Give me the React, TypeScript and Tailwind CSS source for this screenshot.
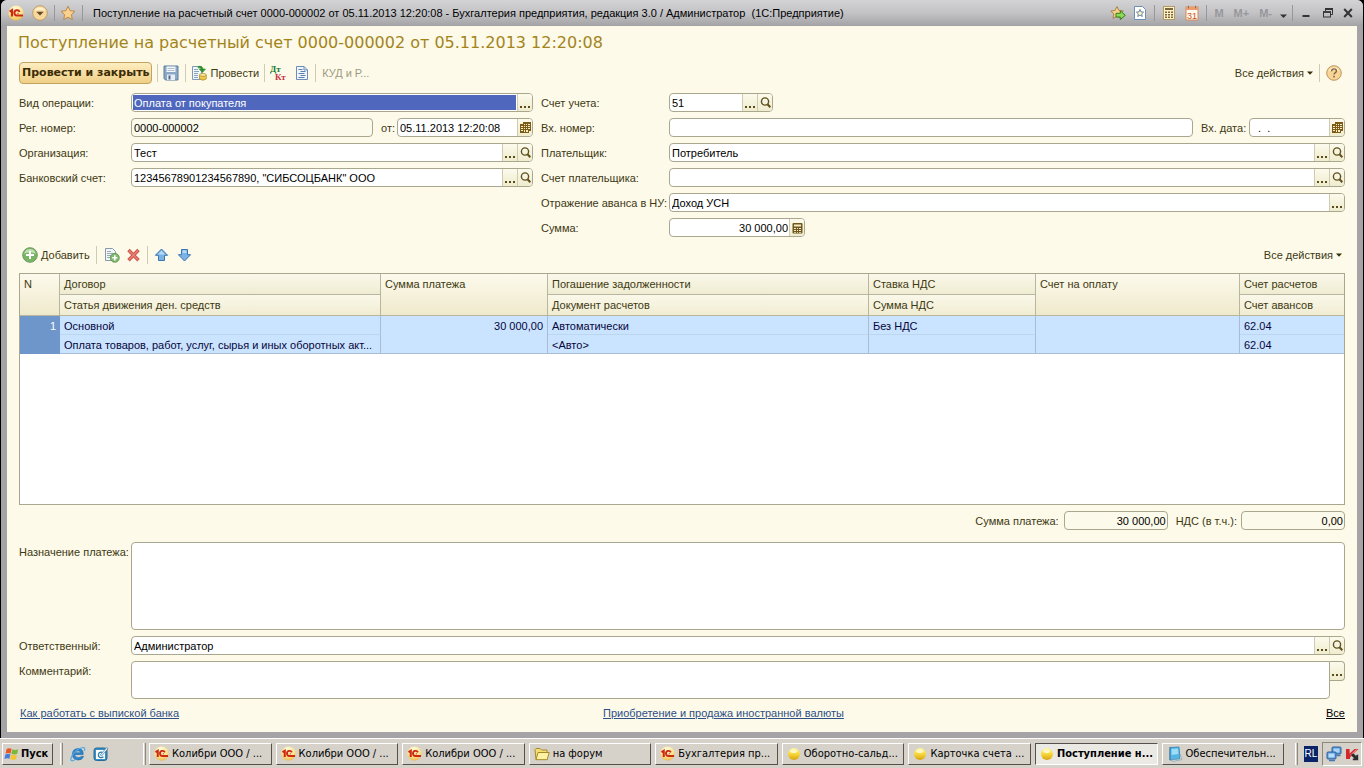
import React from 'react';

type Tool = 'dots' | 'lens' | 'calendar' | 'calc';

const toolLabels: Record<Tool, string> = {
  dots: 'Выбрать',
  lens: 'Открыть',
  calendar: 'Календарь',
  calc: 'Калькулятор',
};

function Dots() {
  return (
    <svg width="12" height="14" viewBox="0 0 12 14" fill="#5a4d1c" shapeRendering="crispEdges">
      <rect x="1" y="10" width="2" height="2" />
      <rect x="5" y="10" width="2" height="2" />
      <rect x="9" y="10" width="2" height="2" />
    </svg>
  );
}

function Lens() {
  return (
    <svg width="13" height="14" viewBox="0 0 13 14" fill="none" stroke="#5f511e">
      <circle cx="6" cy="5.5" r="3.6" strokeWidth="1.4" />
      <path d="M8.5 8.2 L11.3 11.2" strokeWidth="2" />
    </svg>
  );
}

function CalendarGlyph() {
  return (
    <svg width="13" height="14" viewBox="0 0 13 14" shapeRendering="crispEdges">
      <path d="M4 1h8v9h-2v2H1V3h3z" fill="#7a5c16" />
      <path
        d="M5 3h1v1H5zM7 3h1v1H7zM9 3h2v1H9zM5 5h1v1H5zM7 5h1v1H7zM9 5h2v1H9zM5 7h1v1H5zM7 7h1v1H7zM9 7h2v1H9zM2 5h2v1H2zM2 7h2v1H2zM2 9h2v1H2zM5 9h1v2H5zM7 9h2v2H7z"
        fill="#f7edc4"
      />
    </svg>
  );
}

function CalcGlyph() {
  return (
    <svg width="13" height="14" viewBox="0 0 13 14">
      <rect x="1.5" y="2" width="10" height="10.5" rx="1" fill="#6d571c" />
      <path
        d="M3 3.5h7v2H3zM3 7h2v1H3zM6 7h1v1H6zM8 7h2v1H8zM3 9h2v1H3zM6 9h1v1H6zM8 9h2v1H8zM3 11h2v.8H3zM6 11h1v.8H6zM8 11h2v.8H8z"
        fill="#f7edc4"
      />
    </svg>
  );
}

function ToolGlyph({ tool }: { tool: Tool }) {
  if (tool === 'dots') return <Dots />;
  if (tool === 'lens') return <Lens />;
  if (tool === 'calendar') return <CalendarGlyph />;
  return <CalcGlyph />;
}

interface FieldProps {
  id: string;
  value?: string;
  tools?: Tool[];
  className?: string;
  right?: boolean;
  selected?: boolean;
  readOnly?: boolean;
}

function Field({ id, value = '', tools = [], className = 'flex-1', right, selected, readOnly }: FieldProps) {
  return (
    <div
      className={`flex h-[19px] min-w-0 overflow-hidden rounded-[4px] border border-[#aaa78f] ${
        readOnly ? 'bg-[#fcfaea]' : 'bg-white'
      } ${className}`}
    >
      <input
        id={id}
        type="text"
        defaultValue={value}
        readOnly={readOnly}
        className={`min-w-0 flex-1 text-[11px] outline-none ${
          selected
            ? 'm-px bg-[#4f68bd] px-px pt-px leading-[14px] text-white'
            : 'bg-transparent px-[2px] pt-[2px] leading-[15px] text-black'
        } ${right ? 'pr-px text-right' : ''}`}
      />
      {tools.map((tool) => (
        <button
          key={tool}
          type="button"
          aria-label={toolLabels[tool]}
          className="flex w-[15px] shrink-0 items-center justify-center border-l border-[#cfcbb0] bg-linear-to-b from-[#fcfaec] to-[#efecce]"
        >
          <ToolGlyph tool={tool} />
        </button>
      ))}
    </div>
  );
}

function Row({ id, label, wide, children }: { id: string; label: string; wide?: boolean; children: React.ReactNode }) {
  return (
    <div className="flex items-center">
      <label htmlFor={id} className={`shrink-0 whitespace-nowrap ${wide ? 'w-[128px]' : 'w-[112px]'}`}>
        {label}
      </label>
      {children}
    </div>
  );
}

function Sep() {
  return <span className="h-[18px] w-px shrink-0 bg-[#cfccb4]" />;
}

function TitleSep() {
  return <span className="h-[16px] w-px shrink-0 bg-[#98989c]" />;
}

function OneC({ size = 16 }: { size?: number }) {
  return (
    <svg width={size} height={size} viewBox="0 0 16 16" className="shrink-0">
      <defs>
        <radialGradient id="onec" cx="45%" cy="25%" r="80%">
          <stop offset="0" stopColor="#fffde0" />
          <stop offset="0.6" stopColor="#fce48c" />
          <stop offset="1" stopColor="#eeb044" />
        </radialGradient>
      </defs>
      <circle cx="8" cy="8" r="7.6" fill="url(#onec)" />
      <g fill="none" stroke="#cc2a12">
        <path d="M1.6 6.6 L4 5.2 V11.6" strokeWidth="2.2" />
        <path d="M11.6 6.9 A2.7 2.7 0 1 0 9.2 10.6 H15" strokeWidth="2" />
        <path d="M9.3 8.3 H10.6" strokeWidth="1" />
      </g>
    </svg>
  );
}

function Star({ size = 16 }: { size?: number }) {
  return (
    <svg width={size} height={size} viewBox="0 0 16 16" className="shrink-0">
      <path
        d="M8 1.2 L10.1 5.7 L15 6.3 L11.4 9.7 L12.3 14.6 L8 12.2 L3.7 14.6 L4.6 9.7 L1 6.3 L5.9 5.7 Z"
        fill="#f9d08c"
        stroke="#b98a4c"
        strokeWidth="1"
        strokeLinejoin="round"
      />
    </svg>
  );
}

function Ball() {
  return (
    <svg width="14" height="14" viewBox="0 0 14 14" className="shrink-0">
      <defs>
        <linearGradient id="ball" x1="0" y1="0" x2="0" y2="1">
          <stop offset="0" stopColor="#fff7a8" />
          <stop offset="0.5" stopColor="#f7d83a" />
          <stop offset="1" stopColor="#d9a312" />
        </linearGradient>
      </defs>
      <circle cx="7" cy="7" r="6" fill="url(#ball)" />
      <ellipse cx="6.6" cy="4.3" rx="3.4" ry="1.8" fill="#fffde0" opacity="0.8" />
    </svg>
  );
}

function Folder() {
  return (
    <svg width="16" height="16" viewBox="0 0 16 16" className="shrink-0">
      <path d="M1 3.5 L2 2.5 H6 L7.5 4 H13 V13.5 H2 Z" fill="#f5dd72" stroke="#a58a2c" />
      <path d="M4 6.5 H15.2 L13.2 13.7 H2 Z" fill="#fdf2a4" stroke="#a58a2c" />
    </svg>
  );
}

function Notebook() {
  return (
    <svg width="16" height="16" viewBox="0 0 16 16" className="shrink-0">
      <path d="M3 1.5 L12 1 L13 13 L3 14 Z" fill="#55b4e4" stroke="#2d7fb0" strokeWidth="0.8" />
      <path d="M4.5 3 L11 2.5 L11.5 8 L4.5 9 Z" fill="#9bdcf6" />
      <path d="M12.8 8 L15 13.6 L6 15.4 L3.6 14 L13 13 Z" fill="#d8e4ea" stroke="#6f95aa" strokeWidth="0.6" />
      <path d="M2.8 1.5 V14" stroke="#1f5c86" strokeDasharray="1 1" />
    </svg>
  );
}

function TitleBar() {
  return (
    <header className="flex h-[26px] shrink-0 items-center rounded-t-[6px] bg-linear-to-b from-[#d3d3d6] via-[#c3c3c6] to-[#a3a2a5] pr-[10px] pl-[7px] text-black">
      <button type="button" aria-label="Главное меню">
        <OneC />
      </button>
      <button type="button" aria-label="Меню функций" className="ml-2">
        <svg width="16" height="16" viewBox="0 0 16 16">
          <circle cx="8" cy="8" r="7.3" fill="#f8d79b" stroke="#b5935c" strokeWidth="0.8" />
          <path d="M2.4 6 A6 6 0 0 1 13.6 6 Q8 3.8 2.4 6Z" fill="#fff1cf" />
          <path d="M4.3 6.7 H11.7 L8 10.4 Z" fill="#5f4a26" />
        </svg>
      </button>
      <span className="ml-[6px] flex">
        <TitleSep />
      </span>
      <button type="button" aria-label="Избранное" className="ml-[5px]">
        <Star />
      </button>
      <span className="ml-[6px] flex">
        <TitleSep />
      </span>
      <span className="ml-[10px] min-w-0 flex-1 truncate">
        Поступление на расчетный счет 0000-000002 от 05.11.2013 12:20:08 - Бухгалтерия предприятия, редакция 3.0 /
        Администратор&nbsp; (1С:Предприятие)
      </span>
      <div className="flex shrink-0 items-center">
        <button type="button" aria-label="Добавить в избранное" className="mr-[7px]">
          <svg width="16" height="16" viewBox="0 0 16 16">
            <path
              d="M7 1.5 L9 5.5 L13.4 6 L10.2 9 L11 13.4 L7 11.3 L3 13.4 L3.8 9 L0.8 6 L5 5.5 Z"
              fill="#f8d08a"
              stroke="#a8834b"
              strokeLinejoin="round"
            />
            <path d="M6 8.3 H10.3 V5.8 L15.3 10.3 L10.3 14.6 V12 H6 Z" fill="#8edb57" stroke="#357d1c" strokeLinejoin="round" />
          </svg>
        </button>
        <button type="button" aria-label="Список избранного">
          <svg width="14" height="16" viewBox="0 0 14 16">
            <path d="M1.5 1.5 H9.5 L12.5 4.5 V14.5 H1.5 Z" fill="#fff" stroke="#6e8fb5" />
            <path d="M7 4.4 L8 6.9 L10.6 7.1 L8.7 8.9 L9.3 11.5 L7 10.1 L4.7 11.5 L5.3 8.9 L3.4 7.1 L6 6.9 Z" fill="#fdf5c8" stroke="#4c6c93" strokeWidth="0.8" />
          </svg>
        </button>
        <span className="mx-[7px] flex">
          <TitleSep />
        </span>
        <button type="button" aria-label="Калькулятор">
          <svg width="14" height="16" viewBox="0 0 14 16">
            <rect x="1.5" y="1.5" width="11" height="13" fill="#fff0c6" stroke="#b59a66" />
            <path d="M3 3h8v2H3zM3 6.5h2v1.5H3zM6 6.5h2v1.5H6zM9 6.5h2v1.5H9zM3 9h2v1.5H3zM6 9h2v1.5H6zM9 9h2v1.5H9zM3 11.5h2V13H3zM6 11.5h2V13H6zM9 11.5h2V13H9z" fill="#7a683a" />
          </svg>
        </button>
        <button type="button" aria-label="Календарь" className="ml-[9px]">
          <svg width="14" height="16" viewBox="0 0 14 16">
            <rect x="1" y="2" width="12" height="13" fill="#fff8ec" stroke="#cf8b61" />
            <rect x="1" y="2" width="12" height="3" fill="#ec9d6d" />
            <path d="M3.5 0.8v2.6M10.5 0.8v2.6" stroke="#9b6b4c" />
            <text x="7" y="13.5" textAnchor="middle" fontSize="9" fontFamily="Liberation Sans" fill="#d0501c">
              31
            </text>
          </svg>
        </button>
        <span className="mx-[7px] flex">
          <TitleSep />
        </span>
        <div className="flex items-center gap-[10px] font-bold text-[#97979b]">
          <button type="button">M</button>
          <button type="button">M+</button>
          <button type="button">M-</button>
        </div>
        <button type="button" aria-label="Дополнительно" className="ml-[7px]">
          <svg width="9" height="12" viewBox="0 0 9 12">
            <path d="M1 7.5 H8 L4.5 11 Z" fill="#333" />
          </svg>
        </button>
        <span className="mx-[4px] flex">
          <TitleSep />
        </span>
        <button type="button" aria-label="Свернуть" className="ml-[4px]">
          <svg width="10" height="12" viewBox="0 0 10 12">
            <path d="M1.5 9 H8.5" stroke="#333" strokeWidth="2" />
          </svg>
        </button>
        <button type="button" aria-label="Восстановить" className="ml-[11px]">
          <svg width="12" height="12" viewBox="0 0 12 12" fill="none" stroke="#333">
            <path d="M3.5 4 V1.5 H10.5 V7.5 H9" />
            <path d="M3 2 H11" strokeWidth="2" />
            <rect x="1.5" y="5" width="7" height="5" />
            <path d="M1 5 H9" strokeWidth="1.6" />
          </svg>
        </button>
        <button type="button" aria-label="Закрыть" className="ml-[9px]">
          <svg width="10" height="12" viewBox="0 0 10 12">
            <path d="M1.2 2 L8.8 10 M8.8 2 L1.2 10" stroke="#333" strokeWidth="2" />
          </svg>
        </button>
      </div>
    </header>
  );
}

function AllActions() {
  return (
    <button type="button" className="flex items-center gap-[3px]">
      Все действия
      <svg width="6" height="4" viewBox="0 0 6 4">
        <path d="M0 0.5 H6 L3 3.8 Z" fill="#333008" />
      </svg>
    </button>
  );
}

function CommandBar() {
  return (
    <div className="mt-[9px] flex h-[22px] items-center">
      <button
        type="button"
        className="h-[22px] rounded-[4px] border border-[#c3a262] bg-linear-to-b from-[#fdedc0] to-[#efcf86] px-[2px] font-['DejaVu_Sans'] text-[11px] font-bold text-[#3b2c04]"
      >
        Провести и закрыть
      </button>
      <span className="mx-[5px] flex">
        <Sep />
      </span>
      <button type="button" aria-label="Записать">
        <svg width="16" height="16" viewBox="0 0 16 16">
          <path d="M1 1 H15 V15 H2.5 L1 13.5 Z" fill="#8ba8c6" stroke="#5c7c9c" />
          <rect x="3.5" y="1.5" width="9" height="5.5" fill="#f5f8fb" />
          <path d="M4.5 3.5h7M4.5 5.5h7" stroke="#9db0c2" strokeWidth="0.8" />
          <rect x="4" y="9.5" width="8" height="5.5" fill="#e8eef4" />
          <rect x="5.5" y="10.5" width="2" height="4" fill="#4c6b8c" />
        </svg>
      </button>
      <span className="mr-[5px] ml-[6px] flex">
        <Sep />
      </span>
      <button type="button" className="flex items-center gap-[3px]">
        <svg width="16" height="16" viewBox="0 0 16 16">
          <path d="M1.5 1.5 H10.5 V14.5 H1.5 Z" fill="#f3f7fb" stroke="#7e9ab8" />
          <path d="M3 4.5h4M3 6.5h5M3 8.5h4M3 10.5h4M3 12.5h4" stroke="#8aa3bd" />
          <path d="M7 1.5 Q11.5 0.5 12 4 H14.5 L11.4 7.6 L8.2 4 H10.2 Q10 2.5 7 2.8Z" fill="#2f8f2a" stroke="#2f8f2a" strokeWidth="0.6" />
          <path d="M8.5 10 V14 Q12 16.4 15.3 14 V10Z" fill="#efc84a" stroke="#a9882b" strokeWidth="0.7" />
          <ellipse cx="11.9" cy="9.9" rx="3.4" ry="1.5" fill="#fbe691" stroke="#a9882b" strokeWidth="0.7" />
        </svg>
        Провести
      </button>
      <span className="mx-[5px] flex">
        <Sep />
      </span>
      <button type="button" aria-label="Показать проводки">
        <svg width="17" height="16" viewBox="0 0 17 16" fontFamily="Liberation Serif" fontWeight="bold" fontSize="9">
          <text x="0" y="7" fill="#17792a">Дт</text>
          <text x="5" y="15" fill="#c8333a">Кт</text>
        </svg>
      </button>
      <button type="button" aria-label="Отчет" className="ml-[8px]">
        <svg width="14" height="16" viewBox="0 0 14 16">
          <path d="M1.5 1.5 H9 L12.5 5 V14.5 H1.5 Z" fill="#f1f6fc" stroke="#6c8db8" />
          <path d="M9 1.5 V5 H12.5" fill="none" stroke="#6c8db8" />
          <path d="M3.5 4.5h4M5.5 6.5h5M3.5 8.5h6M5.5 10.5h5M3.5 12.5h6" stroke="#5d7fae" />
        </svg>
      </button>
      <span className="mx-[6px] flex">
        <Sep />
      </span>
      <button type="button" className="text-[#9d9a80]">
        КУД и Р...
      </button>
      <div className="ml-auto flex items-center">
        <AllActions />
        <span className="mx-[6px] flex">
          <Sep />
        </span>
        <button type="button" aria-label="Справка" className="mr-[3px]">
          <svg width="16" height="16" viewBox="0 0 16 16">
            <circle cx="8" cy="8" r="7.3" fill="#f9d598" stroke="#b78c51" strokeWidth="0.9" />
            <path d="M2.5 6 A6 6 0 0 1 13.5 6 Q8 4 2.5 6Z" fill="#fff0d0" />
            <path d="M5.6 6.2 Q5.7 3.9 8 3.9 Q10.4 3.9 10.4 6 Q10.4 7.3 8.9 8 Q8 8.5 8 9.6" fill="none" stroke="#7b6440" strokeWidth="1.4" />
            <rect x="7.2" y="10.8" width="1.6" height="1.6" fill="#7b6440" />
          </svg>
        </button>
      </div>
    </div>
  );
}

function TableBar() {
  return (
    <div className="mt-[7px] flex h-[22px] items-center pl-[3px]">
      <button type="button" className="flex items-center gap-[3px]">
        <svg width="16" height="16" viewBox="0 0 16 16">
          <circle cx="8" cy="8" r="7.3" fill="#78b565" stroke="#6d9a62" />
          <path d="M2.2 6.5 A6 6 0 0 1 13.8 6.5 Q8 4.6 2.2 6.5Z" fill="#bfe0b0" />
          <path d="M8 4 V12 M4 8 H12" stroke="#fff" strokeWidth="2" />
        </svg>
        Добавить
      </button>
      <span className="mr-[7px] ml-[6px] flex">
        <Sep />
      </span>
      <button type="button" aria-label="Скопировать">
        <svg width="16" height="16" viewBox="0 0 16 16">
          <path d="M1.5 1.5 H8.5 L11.5 4.5 V13.5 H1.5 Z" fill="#f2f6f8" stroke="#879aab" />
          <path d="M3 4.5h4M3 6.5h6M3 8.5h4M3 10.5h3" stroke="#9aaab6" />
          <circle cx="10.8" cy="10.8" r="4.5" fill="#80b970" stroke="#5a8f4e" strokeWidth="0.8" />
          <path d="M10.8 8.2 V13.4 M8.2 10.8 H13.4" stroke="#fff" strokeWidth="1.6" />
        </svg>
      </button>
      <button type="button" aria-label="Удалить" className="ml-[7px]">
        <svg width="13" height="14" viewBox="0 0 13 14">
          <path d="M1.5 2 L11.5 12.3 M11.5 2 L1.5 12.3" stroke="#c9544a" strokeWidth="3.4" />
          <path d="M2 2.6 L11 11.8 M11 2.6 L2 11.8" stroke="#ea8276" strokeWidth="1.4" />
        </svg>
      </button>
      <span className="mr-[6px] ml-[7px] flex">
        <Sep />
      </span>
      <button type="button" aria-label="Переместить вверх">
        <svg width="15" height="14" viewBox="0 0 15 14">
          <path d="M7.5 1 L13.6 7.3 H10.5 V12.5 H4.5 V7.3 H1.4 Z" fill="#7ab4e6" stroke="#3f74ad" strokeLinejoin="round" />
          <path d="M7.5 2.8 L11 6.4 H4Z" fill="#b6dbf7" />
        </svg>
      </button>
      <button type="button" aria-label="Переместить вниз" className="ml-[8px]">
        <svg width="15" height="14" viewBox="0 0 15 14">
          <path d="M7.5 13 L13.6 6.7 H10.5 V1.5 H4.5 V6.7 H1.4 Z" fill="#7ab4e6" stroke="#3f74ad" strokeLinejoin="round" />
          <path d="M5.5 2.5 H9.5 V5 H5.5Z" fill="#b6dbf7" />
        </svg>
      </button>
      <div className="ml-auto pr-[3px]">
        <AllActions />
      </div>
    </div>
  );
}

const th = 'h-[21px] truncate border-r border-b border-[#b9b6a0] px-1 text-left align-top leading-[20px] font-normal';
const thTall = `${th} bg-linear-to-b from-[#fcfaec] to-[#efe9cc]`;
const thHalf = `${th} bg-linear-to-b from-[#faf8ea] to-[#f0ecd2]`;
const tdTop =
  'h-[19px] truncate border-r border-b border-r-[#a9bcd3] border-b-[#bcd6f0] bg-[#cae3ff] px-1 pt-[2px] leading-[16px]';
const tdLow = 'h-[19px] truncate border-r border-b border-[#a9bcd3] bg-[#cae3ff] px-1 pt-[2px] leading-[16px]';

function PaymentTable() {
  return (
    <div className="mt-[7px] min-h-[120px] flex-1 border border-[#aaa78f] bg-white">
      <table className="w-full table-fixed border-separate border-spacing-0">
        <colgroup>
          <col className="w-[40px]" />
          <col className="w-[321px]" />
          <col className="w-[167px]" />
          <col className="w-[321px]" />
          <col className="w-[167px]" />
          <col className="w-[204px]" />
          <col className="w-[104px]" />
        </colgroup>
        <thead>
          <tr>
            <th rowSpan={2} className={thTall}>N</th>
            <th className={thHalf}>Договор</th>
            <th rowSpan={2} className={thTall}>Сумма платежа</th>
            <th className={thHalf}>Погашение задолженности</th>
            <th className={thHalf}>Ставка НДС</th>
            <th rowSpan={2} className={thTall}>Счет на оплату</th>
            <th className={`${thHalf} border-r-0`}>Счет расчетов</th>
          </tr>
          <tr>
            <th className={thHalf}>Статья движения ден. средств</th>
            <th className={thHalf}>Документ расчетов</th>
            <th className={thHalf}>Сумма НДС</th>
            <th className={`${thHalf} border-r-0`}>Счет авансов</th>
          </tr>
        </thead>
        <tbody className="text-[#06063c]">
          <tr>
            <td rowSpan={2} className="bg-[#6f96cb] px-1 pt-[2px] text-right align-top leading-[16px] text-white">1</td>
            <td className={tdTop}>Основной</td>
            <td rowSpan={2} className={`${tdLow} text-right align-top`}>30 000,00</td>
            <td className={tdTop}>Автоматически</td>
            <td className={tdTop}>Без НДС</td>
            <td rowSpan={2} className={tdLow}></td>
            <td className={`${tdTop} border-r-0`}>62.04</td>
          </tr>
          <tr>
            <td className={tdLow}>Оплата товаров, работ, услуг, сырья и иных оборотных акт...</td>
            <td className={tdLow}>&lt;Авто&gt;</td>
            <td className={tdLow}></td>
            <td className={`${tdLow} border-r-0`}>62.04</td>
          </tr>
        </tbody>
      </table>
    </div>
  );
}

const tasks = [
  { icon: 'onec', text: 'Колибри ООО / ...' },
  { icon: 'onec', text: 'Колибри ООО / ...' },
  { icon: 'onec', text: 'Колибри ООО / ...' },
  { icon: 'folder', text: 'на форум' },
  { icon: 'onec', text: 'Бухгалтерия пр...' },
  { icon: 'ball', text: 'Оборотно-сальд...' },
  { icon: 'ball', text: 'Карточка счета ...' },
  { icon: 'ball', text: 'Поступление н...', active: true },
  { icon: 'note', text: 'Обеспечительн...' },
];

const raised = 'border border-t-white border-l-white border-r-[#55524d] border-b-[#55524d] bg-[#d6d2ca]';
const sunken = 'border border-t-[#55524d] border-l-[#55524d] border-r-white border-b-white bg-[#ebe9e4] font-bold';

function Grip() {
  return <span className="h-[22px] w-[3px] shrink-0 border-r border-l border-r-[#8b8880] border-l-white" />;
}

function Taskbar() {
  return (
    <footer className="flex h-[30px] shrink-0 items-center border-t border-white bg-[#d6d2ca] pr-[2px] pl-[2px] font-['DejaVu_Sans_Condensed','DejaVu_Sans'] text-black">
      <button type="button" className={`flex h-[22px] w-[51px] shrink-0 items-center gap-px pl-px font-bold ${raised}`}>
        <svg width="16" height="16" viewBox="0 0 16 16" className="shrink-0">
          <path d="M2.6 3 Q5 1.5 7.6 2.8 L6.6 7.4 Q4 6.4 1.6 7.6Z" fill="#e8562a" />
          <path d="M8.4 3.2 Q11 4.6 14.2 3.2 L13.2 7.8 Q10.4 9 7.4 7.7Z" fill="#7ab83a" />
          <path d="M1.4 8.4 Q4 7.3 6.4 8.3 L5.4 12.8 Q3 11.7 0.4 13Z" fill="#4a7ce0" />
          <path d="M7.2 8.6 Q10 9.9 13 8.7 L12 13.2 Q9 14.4 6.2 13.1Z" fill="#f5c42c" />
        </svg>
        Пуск
      </button>
      <span className="ml-[7px] flex">
        <Grip />
      </span>
      <button type="button" aria-label="Internet Explorer" className="ml-[7px]">
        <svg width="16" height="16" viewBox="0 0 16 16">
          <path d="M13.2 8.5 H4.6 Q5 11.6 8.4 11.6 Q10.2 11.6 11.2 10.4 H13.6 Q12.2 14 8.3 14 Q2.4 13.8 2.4 8.2 Q2.6 2.8 8.2 2.6 Q13.6 2.8 13.2 8.5 Z M4.8 6.8 H10.9 Q10.4 4.8 8 4.8 Q5.6 4.8 4.8 6.8Z" fill="#2b86cf" stroke="#1a66a8" strokeWidth="0.6" />
          <path d="M14.4 4.8 Q15.8 1 12 1.8 Q7 3 2.8 8.4 Q-0.4 13.6 1.6 14.8 Q3 15.2 5.4 13.4" fill="none" stroke="#4ca8e6" strokeWidth="1.1" />
        </svg>
      </button>
      <button type="button" aria-label="Показать рабочий стол" className="ml-[7px]">
        <svg width="16" height="16" viewBox="0 0 16 16">
          <rect x="1" y="2" width="13" height="12.5" rx="2.5" fill="#3b8fc4" stroke="#256b97" />
          <path d="M3 4 H12 V13 H3 Z" fill="#fff" />
          <path d="M10.4 7.2 A2.8 2.8 0 1 0 10.4 10.6" fill="none" stroke="#2c7db1" strokeWidth="1.3" />
          <path d="M7.2 9 L13.6 1.6 L15 2.8 L8.6 10 Z" fill="#e3eef5" stroke="#256b97" strokeWidth="0.6" />
        </svg>
      </button>
      <span className="ml-[34px] flex">
        <Grip />
      </span>
      <nav className="ml-[3px] flex min-w-0 flex-1 gap-[4px]">
        {tasks.map((task, i) => (
          <button
            key={i}
            type="button"
            className={`flex h-[22px] min-w-0 flex-1 items-center gap-[3px] pl-[4px] ${task.active ? sunken : raised}`}
          >
            {task.icon === 'onec' && <OneC size={15} />}
            {task.icon === 'folder' && <Folder />}
            {task.icon === 'ball' && <Ball />}
            {task.icon === 'note' && <Notebook />}
            <span className="whitespace-nowrap">{task.text}</span>
          </button>
        ))}
      </nav>
      <span className="ml-[11px] flex">
        <Grip />
      </span>
      <button type="button" className="ml-[6px] h-[16px] w-[14px] shrink-0 bg-[#0a246a] text-center font-['Liberation_Sans'] text-[10px] leading-[16px] text-white">
        RL
      </button>
      <div className="ml-[4px] flex h-[24px] w-[40px] shrink-0 items-center justify-center gap-[3px] border border-t-[#8b8880] border-r-white border-b-white border-l-[#8b8880]">
        <svg width="16" height="16" viewBox="0 0 16 16">
          <rect x="6" y="1" width="9" height="7" rx="1" fill="#5b9ad8" stroke="#2d609c" />
          <rect x="7.5" y="2.5" width="6" height="4" fill="#a9d4f6" />
          <rect x="1" y="6" width="9" height="7" rx="1" fill="#5b9ad8" stroke="#2d609c" />
          <rect x="2.5" y="7.5" width="6" height="4" fill="#b8ddf9" />
          <path d="M3 14.5h6M10.5 9.5h4" stroke="#4678ad" strokeWidth="1.4" />
        </svg>
        <svg width="14" height="16" viewBox="0 0 14 16">
          <path d="M1 3 H4.6 V7.5 L9.5 3 H13.4 L5 11.5 V13 H1 Z" fill="#d4262b" />
          <path d="M5 9 L11 3.6 L12.6 3.6 L6.4 10Z" fill="#f08a86" />
          <path d="M6.6 7.8 H8.8 L11.3 10.3 V8.8 H13.2 V14.2 H7.8 V12.4 H9.4 L6.2 9.4Z" fill="#2c2c2c" />
        </svg>
      </div>
    </footer>
  );
}

export default function App() {
  return (
    <div className="flex min-h-screen flex-col bg-black font-['Liberation_Sans',sans-serif] text-[11px] leading-[14px]">
      <div className="mr-px ml-px flex flex-1 flex-col rounded-t-[6px] bg-[#a5a3a6]">
        <TitleBar />
        <main className="mr-[6px] mb-[6px] ml-[6px] flex flex-1 flex-col bg-[#fdfaea] pr-[12px] pb-[12px] pl-[12px] text-[#3d3912]">
          <h1 className="mt-[7px] -ml-px font-['DejaVu_Sans',sans-serif] text-[16px] leading-[20px] text-[#a3841b]">
            Поступление на расчетный счет 0000-000002 от 05.11.2013 12:20:08
          </h1>
          <CommandBar />

          <div className="mt-[9px] grid grid-cols-[514fr_804fr] gap-2">
            <div className="flex min-w-0 flex-col gap-[6px]">
              <Row id="operation" label="Вид операции:">
                <Field id="operation" value="Оплата от покупателя" tools={['dots']} selected />
              </Row>
              <Row id="reg-number" label="Рег. номер:">
                <Field id="reg-number" value="0000-000002" readOnly />
                <label htmlFor="reg-date" className="ml-2 w-[16px] shrink-0">от:</label>
                <Field id="reg-date" value="05.11.2013 12:20:08" tools={['calendar']} className="w-[136px] shrink-0" />
              </Row>
              <Row id="organization" label="Организация:">
                <Field id="organization" value="Тест" tools={['dots', 'lens']} />
              </Row>
              <Row id="bank-account" label="Банковский счет:">
                <Field id="bank-account" value={'12345678901234567890, "СИБСОЦБАНК" ООО'} tools={['dots', 'lens']} />
              </Row>
            </div>

            <div className="flex min-w-0 flex-col gap-[6px]">
              <Row id="account" label="Счет учета:" wide>
                <Field id="account" value="51" tools={['dots', 'lens']} className="w-[104px]" />
              </Row>
              <Row id="in-number" label="Вх. номер:" wide>
                <Field id="in-number" />
                <label htmlFor="in-date" className="ml-2 w-[48px] shrink-0 whitespace-nowrap">Вх. дата:</label>
                <Field id="in-date" value="  .  ." tools={['calendar']} className="w-[96px] shrink-0" />
              </Row>
              <Row id="payer" label="Плательщик:" wide>
                <Field id="payer" value="Потребитель" tools={['dots', 'lens']} />
              </Row>
              <Row id="payer-account" label="Счет плательщика:" wide>
                <Field id="payer-account" tools={['dots', 'lens']} />
              </Row>
              <Row id="advance" label="Отражение аванса в НУ:" wide>
                <Field id="advance" value="Доход УСН" tools={['dots']} />
              </Row>
              <Row id="amount" label="Сумма:" wide>
                <Field id="amount" value="30 000,00" tools={['calc']} className="w-[136px]" right />
              </Row>
            </div>
          </div>

          <TableBar />
          <PaymentTable />

          <div className="mt-[6px] flex items-center justify-end">
            <label htmlFor="total" className="mr-[5px]">Сумма платежа:</label>
            <Field id="total" value="30 000,00" className="w-[104px]" right readOnly />
            <label htmlFor="vat" className="mr-[4px] ml-2">НДС (в т.ч.):</label>
            <Field id="vat" value="0,00" className="w-[104px]" right readOnly />
          </div>

          <div className="mt-[12px] flex items-start">
            <label htmlFor="purpose" className="w-[112px] shrink-0 pt-[3px]">Назначение платежа:</label>
            <textarea id="purpose" className="h-[88px] min-w-0 flex-1 resize-none rounded-[4px] border border-[#aaa78f] bg-white px-[2px] outline-none" />
          </div>

          <div className="mt-[6px]">
            <Row id="responsible" label="Ответственный:">
              <Field id="responsible" value="Администратор" tools={['dots', 'lens']} />
            </Row>
          </div>

          <div className="mt-[6px] flex items-start">
            <label htmlFor="comment" className="w-[112px] shrink-0 pt-[3px]">Комментарий:</label>
            <textarea id="comment" className="h-[38px] min-w-0 flex-1 resize-none rounded-[4px] rounded-tr-none border border-[#aaa78f] bg-white px-[2px] outline-none" />
            <button
              type="button"
              aria-label="Выбрать"
              className="flex h-[20px] w-[15px] shrink-0 items-center justify-center rounded-r-[4px] border border-l-0 border-[#aaa78f] bg-linear-to-b from-[#fcfaec] to-[#efecce]"
            >
              <Dots />
            </button>
          </div>

          <div className="mt-[7px] grid grid-cols-[583fr_742fr] pl-px">
            <a href="#bank" className="justify-self-start text-[#2c4f86] underline">Как работать с выпиской банка</a>
            <div className="flex justify-between">
              <a href="#currency" className="text-[#2c4f86] underline">Приобретение и продажа иностранной валюты</a>
              <a href="#all" className="text-black underline">Все</a>
            </div>
          </div>
        </main>
      </div>
      <Taskbar />
    </div>
  );
}
